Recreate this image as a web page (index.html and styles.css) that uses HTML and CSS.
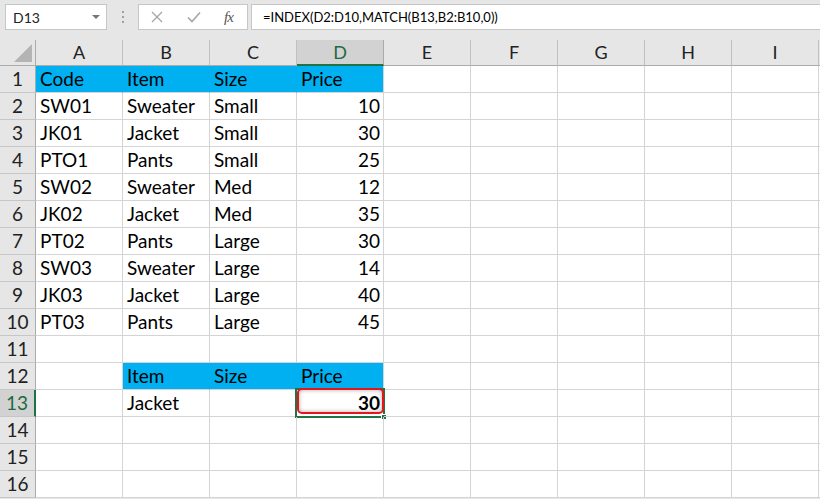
FILE: index.html
```html
<!DOCTYPE html>
<html>
<head>
<meta charset="utf-8">
<link rel="stylesheet" href="styles.css">
</head>
<body>
<div class="app">
  <div class="toolbar">
    <div class="namebox"><span class="nb-text">D13</span><span class="nb-arrow"></span></div>
    <div class="dots"><i></i><i></i><i></i></div>
    <div class="fbtns">
      <svg class="ic-x" width="12" height="12" viewBox="0 0 12 12"><path d="M1 1 L11 11 M11 1 L1 11" stroke="#a6a6a6" stroke-width="1.3" fill="none"/></svg>
      <svg class="ic-ok" width="14" height="12" viewBox="0 0 14 12"><path d="M1 6.5 L5 10.5 L13 1.5" stroke="#a6a6a6" stroke-width="1.6" fill="none"/></svg>
      <span class="fx">fx</span>
    </div>
    <div class="finput">=INDEX(D2:D10,MATCH(B13,B2:B10,0))</div>
  </div>
  <div class="sheet">
    <div class="corner"><span class="tri"></span></div>
    <div class="ch">A</div><div class="ch">B</div><div class="ch">C</div><div class="ch selc">D</div><div class="ch">E</div><div class="ch">F</div><div class="ch">G</div><div class="ch">H</div><div class="ch">I</div><div class="ch last"></div>

    <div class="rh">1</div><div class="c blue">Code</div><div class="c blue">Item</div><div class="c blue">Size</div><div class="c blue end">Price</div><div class="c"></div><div class="c"></div><div class="c"></div><div class="c"></div><div class="c"></div><div class="c last"></div>
    <div class="rh">2</div><div class="c">SW01</div><div class="c">Sweater</div><div class="c">Small</div><div class="c num">10</div><div class="c"></div><div class="c"></div><div class="c"></div><div class="c"></div><div class="c"></div><div class="c last"></div>
    <div class="rh">3</div><div class="c">JK01</div><div class="c">Jacket</div><div class="c">Small</div><div class="c num">30</div><div class="c"></div><div class="c"></div><div class="c"></div><div class="c"></div><div class="c"></div><div class="c last"></div>
    <div class="rh">4</div><div class="c">PTO1</div><div class="c">Pants</div><div class="c">Small</div><div class="c num">25</div><div class="c"></div><div class="c"></div><div class="c"></div><div class="c"></div><div class="c"></div><div class="c last"></div>
    <div class="rh">5</div><div class="c">SW02</div><div class="c">Sweater</div><div class="c">Med</div><div class="c num">12</div><div class="c"></div><div class="c"></div><div class="c"></div><div class="c"></div><div class="c"></div><div class="c last"></div>
    <div class="rh">6</div><div class="c">JK02</div><div class="c">Jacket</div><div class="c">Med</div><div class="c num">35</div><div class="c"></div><div class="c"></div><div class="c"></div><div class="c"></div><div class="c"></div><div class="c last"></div>
    <div class="rh">7</div><div class="c">PT02</div><div class="c">Pants</div><div class="c">Large</div><div class="c num">30</div><div class="c"></div><div class="c"></div><div class="c"></div><div class="c"></div><div class="c"></div><div class="c last"></div>
    <div class="rh">8</div><div class="c">SW03</div><div class="c">Sweater</div><div class="c">Large</div><div class="c num">14</div><div class="c"></div><div class="c"></div><div class="c"></div><div class="c"></div><div class="c"></div><div class="c last"></div>
    <div class="rh">9</div><div class="c">JK03</div><div class="c">Jacket</div><div class="c">Large</div><div class="c num">40</div><div class="c"></div><div class="c"></div><div class="c"></div><div class="c"></div><div class="c"></div><div class="c last"></div>
    <div class="rh">10</div><div class="c">PT03</div><div class="c">Pants</div><div class="c">Large</div><div class="c num">45</div><div class="c"></div><div class="c"></div><div class="c"></div><div class="c"></div><div class="c"></div><div class="c last"></div>
    <div class="rh">11</div><div class="c"></div><div class="c"></div><div class="c"></div><div class="c"></div><div class="c"></div><div class="c"></div><div class="c"></div><div class="c"></div><div class="c"></div><div class="c last"></div>
    <div class="rh">12</div><div class="c"></div><div class="c blue">Item</div><div class="c blue">Size</div><div class="c blue end">Price</div><div class="c"></div><div class="c"></div><div class="c"></div><div class="c"></div><div class="c"></div><div class="c last"></div>
    <div class="rh selr">13</div><div class="c"></div><div class="c">Jacket</div><div class="c"></div><div class="c num bold active">30<span class="selbox"></span><span class="redbox"></span><span class="handle"></span></div><div class="c"></div><div class="c"></div><div class="c"></div><div class="c"></div><div class="c"></div><div class="c last"></div>
    <div class="rh">14</div><div class="c"></div><div class="c"></div><div class="c"></div><div class="c"></div><div class="c"></div><div class="c"></div><div class="c"></div><div class="c"></div><div class="c"></div><div class="c last"></div>
    <div class="rh">15</div><div class="c"></div><div class="c"></div><div class="c"></div><div class="c"></div><div class="c"></div><div class="c"></div><div class="c"></div><div class="c"></div><div class="c"></div><div class="c last"></div>
    <div class="rh">16</div><div class="c"></div><div class="c"></div><div class="c"></div><div class="c"></div><div class="c"></div><div class="c"></div><div class="c"></div><div class="c"></div><div class="c"></div><div class="c last"></div>
  </div>
</div>
</body>
</html>
```
FILE: styles.css
```css
* { box-sizing: border-box; }
html, body { margin: 0; padding: 0; }
body {
  width: 820px;
  height: 499px;
  overflow: hidden;
  background: #e6e6e6;
  font-family: Lato, "Liberation Sans", sans-serif;
  color: #000;
}
.app { width: 820px; }

.toolbar {
  height: 40px;
  display: flex;
  align-items: flex-start;
  padding: 4px 0 0 5px;
}
.namebox {
  width: 102px;
  height: 26px;
  background: #fff;
  border: 1px solid #c6c6c6;
  display: flex;
  align-items: center;
  justify-content: space-between;
  padding: 0 6px 0 7px;
}
.nb-text { font-size: 14px; color: #222; padding-top: 1px; }
.nb-arrow {
  width: 0; height: 0;
  border-left: 4px solid transparent;
  border-right: 4px solid transparent;
  border-top: 4px solid #777;
}
.dots {
  width: 31px;
  height: 26px;
  display: flex;
  flex-direction: column;
  align-items: center;
  justify-content: center;
  gap: 3px;
}
.dots i { display: block; width: 2px; height: 2px; background: #a0a0a0; }
.fbtns {
  width: 110px;
  height: 26px;
  background: #fff;
  border: 1px solid #c6c6c6;
  display: flex;
  align-items: center;
  padding-left: 12px;
}
.ic-x { margin-right: 24px; }
.ic-ok { margin-right: 23px; }
.fx {
  font-family: "Liberation Serif", serif;
  font-style: italic;
  font-size: 15px;
  color: #555;
  letter-spacing: -1px;
}
.finput {
  flex: 1;
  height: 26px;
  margin-left: 3px;
  background: #fff;
  border: 1px solid #c6c6c6;
  border-right: none;
  font-size: 13px;
  line-height: 24px;
  padding-left: 11px;
  color: #000;
}

.sheet {
  display: grid;
  grid-template-columns: 36px repeat(9, 87px) 1fr;
  grid-template-rows: 26px;
  grid-auto-rows: 27px;
  background: #fff;
}
.corner {
  background: #e6e6e6;
  border-right: 1px solid #ababab;
  border-bottom: 1px solid #ababab;
  position: relative;
}
.tri {
  position: absolute;
  right: 3px;
  bottom: 3px;
  width: 0; height: 0;
  border-left: 18px solid transparent;
  border-bottom: 18px solid #b4b4b4;
}
.ch {
  background: #e6e6e6;
  border-right: 1px solid #c0c0c0;
  border-bottom: 1px solid #ababab;
  text-align: center;
  font-size: 18px;
  line-height: 25px;
  color: #222;
}
.ch.last { border-right: none; }
.ch.selc {
  background: #d2d2d2;
  color: #1d6b40;
  border-bottom: 2px solid #217346;
  border-right-color: #ababab;
}
.rh {
  background: #e6e6e6;
  border-right: 1px solid #ababab;
  border-bottom: 1px solid #c6c6c6;
  text-align: center;
  font-size: 19px;
  line-height: 26px;
  color: #222;
}
.rh.selr {
  background: #d2d2d2;
  color: #1d6b40;
  border-right: 2px solid #217346;
}
.c {
  border-right: 1px solid #d4d4d4;
  border-bottom: 1px solid #d4d4d4;
  font-size: 19px;
  line-height: 26px;
  padding-left: 4px;
  white-space: nowrap;
  position: relative;
}
.c.last { border-right: none; }
.c.blue { background: #00b0f0; border-right-color: #00b0f0; }
.c.blue.end { border-right-color: #d4d4d4; }
.c.num { text-align: right; padding-right: 3px; padding-left: 0; }
.c.bold { font-weight: 700; }
.selbox {
  position: absolute;
  left: -2px; top: -2px; right: -2px; bottom: -2px;
  border: 2px solid #217346;
}
.redbox {
  position: absolute;
  left: 0px; top: -2px; right: -1px; bottom: 2px;
  border: 2px solid #e8141a;
  border-radius: 5px;
  box-shadow: inset 0 0 4px rgba(0,0,0,0.35);
}
.handle {
  position: absolute;
  right: -4px; bottom: -4px;
  width: 6px; height: 6px;
  background: #217346;
  border: 1px solid #fff;
}
```
